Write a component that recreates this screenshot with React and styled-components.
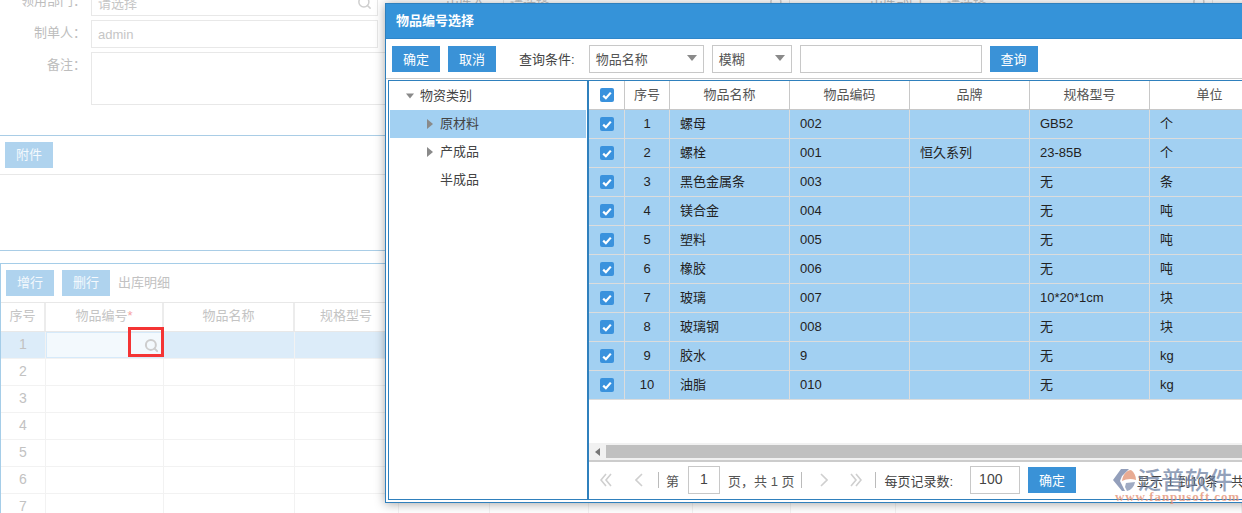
import React from 'react';
import styled, { createGlobalStyle } from 'styled-components';
import { Search } from 'lucide-react';

const Global = createGlobalStyle`
  html, body { margin: 0; padding: 0; background: #fff; }
  body { font-family: "Liberation Sans", "Noto Sans CJK SC", sans-serif; font-size: 13px; color: #333; }
  * { box-sizing: border-box; }
`;

const Page = styled.div`
  position: relative; width: 1242px; height: 513px; overflow: hidden; background: #fff;
`;

/* ---------- dimmed page behind the dialog ---------- */
const Form = styled.div`
  margin-top: -12px; height: 147px; display: flex; flex-direction: column; gap: 4px;
`;
const FormRow = styled.div`display: flex; height: ${p => p.$h || 28}px;`;
const Field = styled.div`
  display: flex; width: ${p => p.$w || 378}px; margin-left: ${p => p.$ml || 0}px; flex: none;
`;
const Label = styled.label`
  width: 86px; margin-right: 5px; flex: none; text-align: right; line-height: ${p => p.$lh || 26}px; color: #bdbdbd;
`;
const FakeInput = styled.div`
  flex: 1; display: flex; align-items: center; justify-content: space-between;
  border: 1px solid #e8e8e8; padding: 0 5px 0 6px; color: #c6c6c6; background: #fff;
`;
const AttachBar = styled.div`
  border-top: 1px solid #a9cde6; border-bottom: 1px solid #e8e8e8; padding: 6px 5px; height: 40px; display: flex;
`;
const DimButton = styled.div`
  width: 48px; height: 26px; background: #afd3ee; color: #f4f9fd; text-align: center; line-height: 25px;
`;
const AttachArea = styled.div`height: 76px; border-bottom: 1px solid #a9cde6;`;
const Panel = styled.div`
  margin-top: 12px; border-top: 1px solid #a5cde8; border-left: 1px solid #a5cde8;
`;
const PanelTools = styled.div`
  height: 39px; padding: 6px 5px; display: flex; gap: 8px; border-bottom: 1px solid #e8e8e8; color: #c2c2c2; line-height: 25px;
`;
const BgRow = styled.div`
  display: flex; height: ${p => p.$head ? 29 : 27}px; background: ${p => p.$sel ? '#dcecf9' : '#fff'};
  border-bottom: 1px solid ${p => p.$head ? '#e8e8e8' : '#f2f2f2'};
`;
const BgCell = styled.div`
  flex: none; width: ${p => p.$w}px; text-align: center; line-height: ${p => p.$head ? 26 : 25}px;
  color: ${p => p.$head ? '#c4c4c4' : '#c2c2c2'}; font-size: ${p => p.$head ? 13 : 14}px;
  border-right: ${p => p.$head ? 2 : 1}px solid ${p => p.$head ? '#ececec' : '#f2f2f2'};
`;
const EditCell = styled.div`
  flex: none; width: 118px; display: flex; align-items: center; justify-content: flex-end; padding-right: 4px;
  background: #f3f9fd; border: 1px solid #d6eafa; color: #cfcfcf;
`;
const Star = styled.span`color: #f5a3a3;`;
const RedBox = styled.div`
  position: absolute; left: 128px; top: 327px; width: 36px; height: 30px; border: 3px solid #f43434;
`;

/* ---------- dialog ---------- */
const Modal = styled.div`
  position: absolute; left: 385px; top: 3px; width: 880px; height: 500px; background: #fff;
  border: 1px solid #2f80bd; box-shadow: 0 1px 10px rgba(0,0,0,.35);
  display: flex; flex-direction: column;
`;
const Title = styled.div`
  height: 35px; flex: none; background: #3593d9; border-bottom: 1px solid #2f86c9;
  color: #fff; font-weight: bold; font-size: 13px; padding-left: 10px; line-height: 33px;
`;
const Toolbar = styled.div`
  height: 40px; flex: none; display: flex; align-items: center; padding: 0 0 0 6px;
  border-bottom: 1px solid #ccc;
`;
const Btn = styled.button`
  width: 48px; height: 26px; flex: none; margin-left: ${p => p.$ml || 0}px; border: 0; padding: 0 0 1px; background: #3a92d7; color: #fff;
  font: inherit; font-size: 13px;
`;
const ToolLabel = styled.span`margin: 0 14px 0 23px; color: #444; padding-bottom: 1px;`;
const Select = styled.div`
  width: ${p => p.$w}px; height: 28px; margin-right: 8px; flex: none; border: 1px solid #c8c8c8; display: flex; align-items: center;
  justify-content: space-between; padding: 0 6px 1px; color: #555;
`;
const TextBox = styled.div`width: 182px; height: 28px; flex: none; border: 1px solid #c8c8c8;`;
const Body = styled.div`
  margin: 1px 0 2px 2px; height: 420px; flex: none; display: flex; border: 1px solid #2f80bd;
`;
const Tree = styled.div`
  width: 200px; flex: none; border-right: 2px solid #2f80bd; padding: 1px 0 0 1px;
`;
const TreeRow = styled.div`
  height: 28px; width: 196px; display: flex; align-items: center; padding: 0 0 1px ${p => p.$indent}px; gap: 6px;
  background: ${p => p.$sel ? '#a2d0f2' : 'transparent'}; color: #444; line-height: 26px;
`;
const IconSlot = styled.span`width: 8px; flex: none; display: flex; align-items: center; justify-content: center;`;
const Main = styled.div`flex: 1; min-width: 0; display: flex; flex-direction: column;`;
const Row = styled.div`
  height: 29px; flex: none; display: flex; background: ${p => p.$head ? '#fff' : '#a2d0f2'};
  border-bottom: 1px solid ${p => p.$head ? '#c8c8c8' : '#dcdcdc'};
`;
const Cell = styled.div`
  width: ${p => p.$w}px; flex: none; display: flex; align-items: center;
  justify-content: ${p => p.$center ? 'center' : 'flex-start'};
  padding-left: ${p => p.$center ? 0 : 10}px;
  color: ${p => p.$head ? '#555' : '#222'}; line-height: 26px; padding-bottom: 1px;
  border-right: 1px solid ${p => p.$head ? '#c8c8c8' : '#dcdcdc'};
`;
const CheckBox = styled.span`
  width: 14px; height: 14px; margin-top: 1px; border-radius: 2px; background: #3a92dd; display: flex; align-items: center; justify-content: center;
`;
const Spacer = styled.div`flex: 1;`;
const ScrollBar = styled.div`
  height: 17px; flex: none; background: #f1f1f1; display: flex; align-items: center; padding: 1px 0 1px 0;
`;
const ScrollArrow = styled.span`width: 17px; flex: none; display: flex; justify-content: center;`;
const ScrollThumb = styled.div`flex: 1; height: 13px; background: #c0c0c0;`;
const Pager = styled.div`
  height: 39px; flex: none; border-top: 2px solid #ccc; display: flex; align-items: center; color: #555; padding-bottom: 1px;
`;
const Sep = styled.span`
  width: 1px; height: 16px; flex: none; background: #bbb; margin-left: ${p => p.$ml}px;
`;
const PagerIcon = styled.svg`flex: none; margin-left: ${p => p.$ml}px; fill: none; stroke: #cfcfcf; stroke-width: 1.6;`;
const PagerText = styled.span`
  flex: none; margin-left: ${p => p.$ml}px; white-space: nowrap; color: ${p => p.$dark ? '#444' : '#555'};
`;
const PagerInput = styled.div`
  flex: none; width: ${p => p.$w}px; height: 28px; margin-left: ${p => p.$ml}px; border: 1px solid #c8c8c8;
  display: flex; align-items: center; padding-left: ${p => p.$pl || 0}px;
  justify-content: ${p => p.$pl ? 'flex-start' : 'center'}; color: #444; font-size: 14px; padding-bottom: 3px;
`;

/* ---------- watermark ---------- */
const Mark = styled.div`
  position: absolute; left: 1112px; top: 466px; width: 124px; height: 40px; pointer-events: none;
`;
const MarkLogo = styled.svg`position: absolute; left: 1px; top: 2px;`;
const MarkName = styled.div`
  position: absolute; left: 25px; top: -3px; font-size: 24px; line-height: 32px; font-weight: 500; white-space: nowrap;
  color: rgba(105,125,160,.72); font-family: "Noto Sans CJK SC", sans-serif;
`;
const MarkUrl = styled.div`
  position: absolute; left: 3px; top: 24px; font-family: "Liberation Serif", serif; font-weight: bold; font-size: 13px;
  letter-spacing: 0.9px; line-height: 14px; white-space: nowrap; color: rgba(226,140,110,.75);
`;

const Caret = ({ dir = 'down', w = 10, c = '#8a8a8a' }) => (
  dir === 'down'
    ? <svg width={w} height={6} viewBox="0 0 10 6"><path d="M0 0h10L5 6z" fill={c} /></svg>
    : <svg width={6} height={10} viewBox="0 0 6 10"><path d="M0 0v10l6-5z" fill={c} /></svg>
);
const Tick = () => (
  <svg width="10" height="9" viewBox="0 0 10 9"><path d="M1.2 4.6 3.9 7.2 8.8 1.6" stroke="#fff" strokeWidth="2.2" fill="none" /></svg>
);
const Chev = ({ left, double, ml }) => (
  <PagerIcon $ml={ml} width={double ? 12 : 8} height="14" viewBox={double ? '0 0 12 14' : '0 0 8 14'}>
    {double
      ? <path d={left ? 'M6 1 1 7l5 6M11 1 6 7l5 6' : 'M1 1l5 6-5 6M6 1l5 6-5 6'} />
      : <path d={left ? 'M7 1 1 7l6 6' : 'M1 1l6 6-6 6'} />}
  </PagerIcon>
);

const bgCols = [45, 118, 131, 104, 91, 99, 104, 98, 105, 346];
const bgHeads = ['序号', '物品编号', '物品名称', '规格型号'];
const cols = [36, 45, 120, 120, 120, 120, 120];
const heads = ['序号', '物品名称', '物品编码', '品牌', '规格型号', '单位'];
const data = [
  ['1', '螺母', '002', '', 'GB52', '个'],
  ['2', '螺栓', '001', '恒久系列', '23-85B', '个'],
  ['3', '黑色金属条', '003', '', '无', '条'],
  ['4', '镁合金', '004', '', '无', '吨'],
  ['5', '塑料', '005', '', '无', '吨'],
  ['6', '橡胶', '006', '', '无', '吨'],
  ['7', '玻璃', '007', '', '10*20*1cm', '块'],
  ['8', '玻璃钢', '008', '', '无', '块'],
  ['9', '胶水', '9', '', '无', 'kg'],
  ['10', '油脂', '010', '', '无', 'kg'],
];

export default function App() {
  return (
    <Page>
      <Global />
      <Form>
        <FormRow>
          <Field><Label>领用部门：</Label><FakeInput>请选择<Search size={15} strokeWidth={2.4} color="#cfcfcf" /></FakeInput></Field>
          <Field $ml={34}><Label>出库人：</Label><FakeInput>请选择<Search size={15} strokeWidth={2.4} color="#cfcfcf" /></FakeInput></Field>
          <Field $ml={59} $w={364}><Label>出库部门：</Label><FakeInput>请选择<Search size={15} strokeWidth={2.4} color="#cfcfcf" /></FakeInput></Field>
        </FormRow>
        <FormRow>
          <Field><Label>制单人：</Label><FakeInput>admin</FakeInput></Field>
        </FormRow>
        <FormRow $h={53}>
          <Field $w={790}><Label>备注：</Label><FakeInput /></Field>
        </FormRow>
      </Form>
      <AttachBar><DimButton>附件</DimButton></AttachBar>
      <AttachArea />
      <Panel>
        <PanelTools>
          <DimButton>增行</DimButton>
          <DimButton>删行</DimButton>
          <span>出库明细</span>
        </PanelTools>
        <BgRow $head>
          {bgCols.map((w, i) => (
            <BgCell key={i} $w={w} $head>
              {bgHeads[i]}{i === 1 && <Star>*</Star>}
            </BgCell>
          ))}
        </BgRow>
        {[1, 2, 3, 4, 5, 6, 7].map(n => (
          <BgRow key={n} $sel={n === 1}>
            {bgCols.map((w, i) => {
              if (n === 1 && i === 1) {
                return <EditCell key={i}><Search size={15} strokeWidth={3.2} color="#cdcdcd" /></EditCell>;
              }
              return <BgCell key={i} $w={w}>{i === 0 ? n : ''}</BgCell>;
            })}
          </BgRow>
        ))}
      </Panel>
      <RedBox />

      <Modal>
        <Title>物品编号选择</Title>
        <Toolbar>
          <Btn>确定</Btn>
          <Btn $ml={8}>取消</Btn>
          <ToolLabel>查询条件:</ToolLabel>
          <Select $w={115}>物品名称<Caret /></Select>
          <Select $w={80}>模糊<Caret /></Select>
          <TextBox />
          <Btn $ml={8}>查询</Btn>
        </Toolbar>
        <Body>
          <Tree>
            <TreeRow $indent={16}><IconSlot><Caret w={9} /></IconSlot>物资类别</TreeRow>
            <TreeRow $indent={36} $sel><IconSlot><Caret dir="right" /></IconSlot>原材料</TreeRow>
            <TreeRow $indent={36}><IconSlot><Caret dir="right" /></IconSlot>产成品</TreeRow>
            <TreeRow $indent={36}><IconSlot />半成品</TreeRow>
          </Tree>
          <Main>
            <Row $head>
              <Cell $w={cols[0]} $center $head><CheckBox><Tick /></CheckBox></Cell>
              {heads.map((h, i) => <Cell key={h} $w={cols[i + 1]} $center $head>{h}</Cell>)}
            </Row>
            {data.map(r => (
              <Row key={r[0]}>
                <Cell $w={cols[0]} $center><CheckBox><Tick /></CheckBox></Cell>
                {r.map((v, i) => <Cell key={i} $w={cols[i + 1]} $center={i === 0}>{v}</Cell>)}
              </Row>
            ))}
            <Spacer />
            <ScrollBar>
              <ScrollArrow><svg width="5" height="8" viewBox="0 0 5 8"><path d="M5 0v8L0 4z" fill="#777" /></svg></ScrollArrow>
              <ScrollThumb />
            </ScrollBar>
            <Pager>
              <Chev left double ml={11} />
              <Chev left ml={23} />
              <Sep $ml={15} />
              <PagerText $ml={7}>第</PagerText>
              <PagerInput $w={32} $ml={9}>1</PagerInput>
              <PagerText $ml={8}>页，共 1 页</PagerText>
              <Sep $ml={7} />
              <Chev ml={18} />
              <Chev double ml={22} />
              <Sep $ml={13} />
              <PagerText $ml={8} $dark>每页记录数:</PagerText>
              <PagerInput $w={50} $ml={17} $pl={8}>100</PagerInput>
              <Btn $ml={8}>确定</Btn>
              <PagerText $ml={61} $dark>显示 1 到10条，共 10 条</PagerText>
            </Pager>
          </Main>
        </Body>
      </Modal>

      <Mark>
        <MarkLogo width="24" height="26" viewBox="0 0 24 26">
          <path d="M8 1h8L9 8l-2 5 5 10H9L0 12z" fill="rgba(120,135,170,.8)" />
          <path d="M9 13c1-7 5-11 9-11 3 2 5 6 5 10-5-2-10-1-14 1z" fill="rgba(226,150,120,.8)" />
          <path d="M13 15l9-1c-1 5-4 8-8 9l-2-4z" fill="rgba(120,135,170,.7)" />
        </MarkLogo>
        <MarkName>泛普软件</MarkName>
        <MarkUrl>www.fanpusoft.com</MarkUrl>
      </Mark>
    </Page>
  );
}
